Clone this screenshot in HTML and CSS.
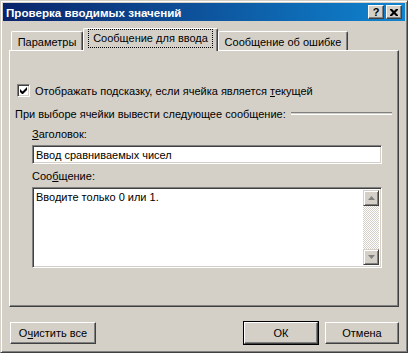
FILE: index.html
```html
<!DOCTYPE html>
<html>
<head>
<meta charset="utf-8">
<title>Проверка вводимых значений</title>
<link rel="stylesheet" href="styles.css">
</head>
<body>
    <div class="window">
        <div class="title-bar">
            <span class="title-text">Проверка вводимых значений</span>
            <div class="title-buttons">
                <button class="title-btn help">?</button>
                <button class="title-btn close">
                    <svg width="8" height="7" viewBox="0 0 8 7"><path d="M0 0h2l2 2 2-2h2v1l-2.5 2.5L8 6v1H6L4 5 2 7H0V6l2.5-2.5L0 1z" fill="#000"/></svg>
                </button>
            </div>
        </div>

        <div class="tabs">
            <div class="tab first">Параметры</div>
            <div class="tab active"><span class="focus">Сообщение для ввода</span></div>
            <div class="tab">Сообщение об ошибке</div>
        </div>

        <div class="panel">
            <div class="check-row">
                <span class="checkbox">
                    <svg width="7" height="7" viewBox="0 0 7 7"><path d="M0 2v3l2 2h1l4-4V0L2.5 4.5z" fill="#000"/></svg>
                </span>
                <span>Отображать подсказку, если ячейка является <u>т</u>екущей</span>
            </div>

            <div class="group-label">
                <span>При выборе ячейки вывести следующее сообщение:</span>
                <span class="etched"></span>
            </div>

            <div class="field-label"><u>З</u>аголовок:</div>
            <div class="input">Ввод сравниваемых чисел</div>

            <div class="field-label">Соо<u>б</u>щение:</div>
            <div class="textarea">
                <div class="textarea-text">Вводите только 0 или 1.</div>
                <div class="scrollbar">
                    <div class="scroll-btn">
                        <svg width="7" height="4" viewBox="0 0 7 4"><path d="M3.5 0L7 4H0z" fill="#808080"/></svg>
                    </div>
                    <div class="scroll-track"></div>
                    <div class="scroll-btn">
                        <svg width="7" height="4" viewBox="0 0 7 4"><path d="M0 0h7L3.5 4z" fill="#808080"/></svg>
                    </div>
                </div>
            </div>
        </div>

        <div class="footer">
            <button class="button clear">О<u>ч</u>истить все</button>
            <div class="footer-right">
                <button class="button default">ОК</button>
                <button class="button">Отмена</button>
            </div>
        </div>
    </div>
</body>
</html>
```

FILE: styles.css
```css
body {
    margin: 0;
    padding: 0;
    background-color: #D4D0C8;
    font-family: 'Liberation Sans', Arial, sans-serif;
    font-size: 11px;
    color: #000000;
}

u {
    text-decoration: underline;
    text-underline-offset: 1px;
}

.window {
    width: 408px;
    height: 353px;
    box-sizing: border-box;
    background-color: #D4D0C8;
    border: 1px solid;
    border-color: #D4D0C8 #404040 #404040 #D4D0C8;
    box-shadow: inset 1px 1px #FFFFFF, inset -1px -1px #808080;
    padding: 2px;
    display: flex;
    flex-direction: column;
}

.title-bar {
    height: 18px;
    background: linear-gradient(to right, #0A246A, #1084D0);
    display: flex;
    align-items: center;
    justify-content: space-between;
    padding-left: 3px;
    padding-right: 3px;
}

.title-text {
    color: #FFFFFF;
    font-weight: bold;
    font-size: 11.6px;
}

.title-buttons {
    display: flex;
    gap: 2px;
}

.title-btn {
    width: 16px;
    height: 14px;
    padding: 0;
    margin: 0;
    box-sizing: border-box;
    background-color: #D4D0C8;
    border: 1px solid;
    border-color: #FFFFFF #404040 #404040 #FFFFFF;
    box-shadow: inset -1px -1px #808080;
    display: flex;
    align-items: center;
    justify-content: center;
    font-family: 'Liberation Sans', Arial, sans-serif;
    font-weight: bold;
    font-size: 11px;
    line-height: 12px;
    color: #000000;
}

.tabs {
    display: flex;
    align-items: flex-end;
    margin: 7px 0 0 8px;
    height: 22px;
    position: relative;
    z-index: 1;
}

.tab {
    height: 19px;
    box-sizing: border-box;
    border: 1px solid;
    border-color: #FFFFFF #404040 transparent #FFFFFF;
    border-bottom: none;
    border-radius: 2px 2px 0 0;
    box-shadow: inset -1px 0 #808080;
    background-color: #D4D0C8;
    display: flex;
    align-items: center;
    justify-content: center;
    padding-top: 1px;
}

.tab.first {
    width: 72px;
}

.tab.active {
    width: 135px;
    height: 23px;
    margin-bottom: -1px;
    padding-top: 0;
    padding-bottom: 3px;
}

.tab:last-child {
    width: 130px;
}

.focus {
    outline: 1px dotted #000000;
    outline-offset: 0;
    padding: 2px 4px 3px;
}

.panel {
    margin: 0 6px;
    height: 257px;
    box-sizing: border-box;
    border: 1px solid;
    border-color: #FFFFFF #404040 #404040 #FFFFFF;
    box-shadow: inset -1px -1px #808080;
    display: flex;
    flex-direction: column;
}

.check-row {
    display: flex;
    align-items: center;
    gap: 5px;
    margin: 33px 0 0 7px;
    height: 13px;
}

.checkbox {
    width: 13px;
    height: 13px;
    box-sizing: border-box;
    background-color: #FFFFFF;
    border: 1px solid;
    border-color: #808080 #FFFFFF #FFFFFF #808080;
    box-shadow: inset 1px 1px #404040, inset -1px -1px #D4D0C8;
    display: flex;
    align-items: center;
    justify-content: center;
}

.group-label {
    display: flex;
    align-items: center;
    gap: 5px;
    margin: 10px 6px 0 5px;
    height: 13px;
}

.etched {
    flex: 1;
    height: 1px;
    border-top: 1px solid #808080;
    border-bottom: 1px solid #FFFFFF;
}

.field-label {
    margin: 8px 0 0 22px;
    height: 13px;
    line-height: 13px;
}

.input,
.textarea {
    margin: 4px 0 0 22px;
    width: 350px;
    box-sizing: border-box;
    background-color: #FFFFFF;
    border: 1px solid;
    border-color: #808080 #FFFFFF #FFFFFF #808080;
    box-shadow: inset 1px 1px #404040, inset -1px -1px #D4D0C8;
}

.input {
    height: 19px;
    padding: 2px 3px;
    line-height: 14px;
}

.input + .field-label {
    margin-top: 6px;
}

.textarea {
    height: 81px;
    display: flex;
    padding: 2px;
}

.textarea-text {
    flex: 1;
    padding: 1px 1px;
    line-height: 13px;
}

.scrollbar {
    width: 16px;
    display: flex;
    flex-direction: column;
}

.scroll-btn {
    height: 16px;
    box-sizing: border-box;
    background-color: #D4D0C8;
    border: 1px solid;
    border-color: #D4D0C8 #404040 #404040 #D4D0C8;
    box-shadow: inset 1px 1px #FFFFFF, inset -1px -1px #808080;
    display: flex;
    align-items: center;
    justify-content: center;
}

.scroll-track {
    flex: 1;
    background: repeating-conic-gradient(#D4D0C8 0 25%, #FFFFFF 0 50%) 0 0 / 2px 2px;
}

.footer {
    display: flex;
    justify-content: space-between;
    margin: 15px 6px 0 7px;
}

.footer-right {
    display: flex;
    gap: 7px;
}

.button {
    height: 22px;
    width: 74px;
    padding: 0;
    margin: 0;
    box-sizing: border-box;
    background-color: #D4D0C8;
    border: 1px solid;
    border-color: #FFFFFF #404040 #404040 #FFFFFF;
    box-shadow: inset -1px -1px #808080;
    font-family: 'Liberation Sans', Arial, sans-serif;
    font-size: 11px;
    color: #000000;
}

.button.clear {
    width: 86px;
}

.button.default {
    outline: 1px solid #000000;
    outline-offset: 0;
}
```
